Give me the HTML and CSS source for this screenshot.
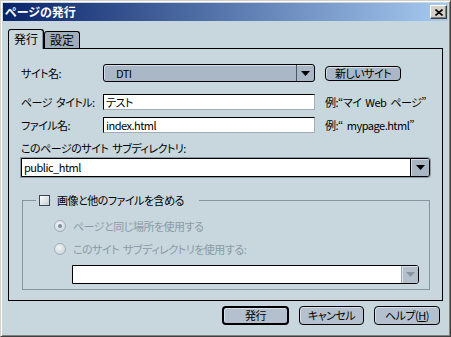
FILE: index.html
```html
<!DOCTYPE html>
<html lang="ja">
<head>
    <meta charset="UTF-8">
    <title>ページの発行</title>
    <link rel="stylesheet" href="styles.css">
</head>
<body>
    <div class="window">
        <div class="titlebar">
            <span class="title">ページの発行</span>
            <button class="close">
                <svg width="8" height="7" viewBox="0 0 8 7"><path d="M0.5 0.5L7.5 6.5M7.5 0.5L0.5 6.5" stroke="#000" stroke-width="1.6"/></svg>
            </button>
        </div>

        <div class="tabs">
            <div class="tab active">発行</div>
            <div class="tab">設定</div>
        </div>

        <div class="panel">
            <div class="row row-site">
                <span class="label">サイト名:</span>
                <div class="combo">
                    <span class="combo-text">DTI</span>
                    <span class="combo-arrow">
                        <svg width="9" height="5" viewBox="0 0 9 5"><path d="M0 0H9L4.5 5Z" fill="#000"/></svg>
                    </span>
                </div>
                <button class="btn btn-small">新しいサイト</button>
            </div>
            <div class="row row-title">
                <span class="label">ページ タイトル:</span>
                <input class="field" type="text" value="テスト">
                <span class="hint">例:“マイ Web ページ”</span>
            </div>
            <div class="row row-file">
                <span class="label">ファイル名:</span>
                <input class="field" type="text" value="index.html">
                <span class="hint">例:“ mypage.html”</span>
            </div>

            <div class="subdir-label">このページのサイト サブディレクトリ:</div>
            <div class="select">
                <span class="select-text">public_html</span>
                <span class="select-arrow">
                    <svg width="9" height="5" viewBox="0 0 9 5"><path d="M0 0H9L4.5 5Z" fill="#000"/></svg>
                </span>
            </div>

            <fieldset class="group">
                <legend class="group-legend">
                    <span class="checkbox"></span>
                    <span>画像と他のファイルを含める</span>
                </legend>
                <div class="radio-row first">
                    <span class="radio checked"></span>
                    <span>ページと同じ場所を使用する</span>
                </div>
                <div class="radio-row">
                    <span class="radio"></span>
                    <span>このサイト サブディレクトリを使用する:</span>
                </div>
                <div class="select select-disabled">
                    <span class="select-text"></span>
                    <span class="select-arrow">
                        <svg width="9" height="5" viewBox="0 0 9 5"><path d="M0 0H9L4.5 5Z" fill="#8994a0"/></svg>
                    </span>
                </div>
            </fieldset>
        </div>

        <div class="actions">
            <button class="btn btn-default">発行</button>
            <button class="btn btn-cancel">キャンセル</button>
            <button class="btn btn-help">ヘルプ(<u>H</u>)</button>
        </div>
    </div>
</body>
</html>
```
FILE: styles.css
```css
* {
    box-sizing: border-box;
}

body {
    margin: 0;
    font-family: "Noto Sans CJK JP", "Liberation Sans", sans-serif;
    font-size: 11px;
    font-feature-settings: "palt";
    letter-spacing: -0.5px;
    word-spacing: 2px;
    line-height: 14px;
    color: #000;
}

.window {
    width: 451px;
    height: 337px;
    padding: 2px;
    background-color: #c7d7dd;
    border: 1px solid;
    border-color: #d4d0c8 #404040 #404040 #d4d0c8;
    box-shadow: inset 1px 1px #fff, inset -1px -1px #808080;
}

.titlebar {
    height: 18px;
    display: flex;
    align-items: center;
    justify-content: space-between;
    padding: 0 1px 0 2px;
    background: linear-gradient(to right, #0a246a, #a6caf0);
    color: #fff;
    font-size: 12px;
    font-weight: bold;
    letter-spacing: 0;
}

.close {
    width: 17px;
    height: 14px;
    padding: 0;
    display: flex;
    align-items: center;
    justify-content: center;
    background-color: #d4d0c8;
    border: 1px solid;
    border-color: #fff #404040 #404040 #fff;
    box-shadow: inset -1px -1px #808080;
}

/* pestañas */
.tabs {
    display: flex;
    align-items: flex-end;
    margin: 8px 0 0 5px;
    position: relative;
    z-index: 1;
    font-size: 12px;
    letter-spacing: 0;
}

.tab {
    height: 17px;
    padding: 1px 5px 0 5px;
    background-color: #a2adbb;
    border: 1px solid #000;
    border-bottom: none;
    border-radius: 3px 3px 0 0;
}

.tab.active {
    height: 20px;
    padding-top: 2px;
    margin-bottom: -1px;
    background-color: #c7d7dd;
    box-shadow: inset -1px 0 #8794a0;
}

.panel {
    height: 253px;
    margin: 0 5px;
    padding: 15px 12px 0 12px;
    border: 1px solid #000;
}

.row {
    display: flex;
    align-items: center;
    white-space: nowrap;
}

.row-site {
    height: 18px;
}

.row-title {
    margin-top: 12px;
}

.row-file {
    margin-top: 7px;
}

.label {
    width: 82px;
    flex-shrink: 0;
}

.combo {
    width: 212px;
    height: 18px;
    flex-shrink: 0;
    display: flex;
    background-color: #a9b7c7;
    border: 1px solid #000;
    border-radius: 3px;
    box-shadow: inset 1px 1px #d3dde6;
}

.combo-text {
    flex: 1;
    padding-left: 12px;
    line-height: 16px;
}

.combo-arrow {
    width: 18px;
    display: flex;
    align-items: center;
    justify-content: center;
    border-left: 1px solid #4a5866;
}

.field {
    width: 212px;
    height: 16px;
    flex-shrink: 0;
    padding: 0 2px;
    margin: 0;
    font: inherit;
    font-feature-settings: "palt";
    letter-spacing: inherit;
    background-color: #fff;
    border: 1px solid;
    border-color: #000 #a0acb8 #a0acb8 #000;
    outline: none;
}

.hint {
    margin-left: 10px;
}

.btn {
    height: 19px;
    padding: 0;
    font: inherit;
    font-feature-settings: "palt";
    letter-spacing: inherit;
    line-height: 15px;
    background-color: #b4c0cd;
    border: 1px solid #000;
    border-radius: 4px;
    box-shadow: inset 1px 1px #d6dee6;
    color: #000;
}

.btn-small {
    width: 76px;
    height: 15px;
    flex-shrink: 0;
    margin-left: 10px;
    line-height: 12px;
    background-color: #aab7c7;
}

.subdir-label {
    margin-top: 8px;
    white-space: nowrap;
}

.select {
    height: 19px;
    margin-top: 3px;
    display: flex;
    background-color: #fff;
    border: 1px solid #000;
    border-radius: 0 3px 3px 0;
    box-shadow: 0 0 0 1px #8c99a6;
}

.select-text {
    flex: 1;
    padding-left: 2px;
    line-height: 17px;
}

.select-arrow {
    width: 19px;
    display: flex;
    align-items: center;
    justify-content: center;
    background-color: #a8b5c3;
    border-left: 1px solid #000;
    border-radius: 0 2px 2px 0;
    box-shadow: inset 1px 1px #d3dde6;
}

/* grupo de imágenes */
.group {
    width: 408px;
    margin: 16px 0 0 1px;
    padding: 0 0 5px 0;
    border: 1px solid #8794a0;
    color: #8c9aa6;
    white-space: nowrap;
}

.group-legend {
    display: flex;
    align-items: center;
    gap: 7px;
    margin-left: 13px;
    padding: 0 15px 0 3px;
    color: #000;
}

.checkbox {
    width: 11px;
    height: 11px;
    border: 1px solid #3c4650;
    background: linear-gradient(135deg, #fff, #c2cfd8);
}

.radio-row {
    display: flex;
    align-items: center;
    gap: 7px;
    height: 15px;
    margin: 8px 0 0 31px;
}

.radio-row.first {
    margin-top: 11px;
}

.radio {
    width: 12px;
    height: 12px;
    display: flex;
    align-items: center;
    justify-content: center;
    border: 1px solid #a2aeb8;
    border-radius: 50%;
    background: radial-gradient(circle at 40% 35%, #f2f5f7, #c3ced6);
}

.radio.checked::after {
    content: "";
    width: 4px;
    height: 4px;
    border-radius: 50%;
    background-color: #7f8c98;
}

.select-disabled {
    width: 347px;
    height: 19px;
    margin: 9px 0 0 49px;
    box-shadow: none;
}

.select-disabled .select-arrow {
    width: 17px;
    background-color: #b3bfcb;
    border-left: 1px solid #9aa6b2;
    box-shadow: inset 1px 1px #dbe3ea;
}

.actions {
    display: flex;
    justify-content: flex-end;
    gap: 10px;
    margin-top: 5px;
    padding-right: 8px;
}

.btn-default {
    width: 67px;
    border-width: 2px;
}

.btn-cancel {
    width: 65px;
}

.btn-help {
    width: 66px;
}
```
